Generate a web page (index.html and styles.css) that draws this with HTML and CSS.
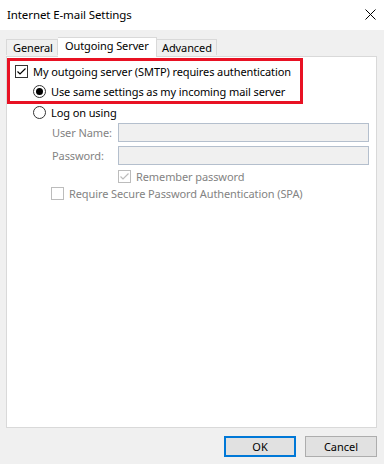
FILE: index.html
```html
<!DOCTYPE html>
<html>
<head>
<meta charset="utf-8">
<link rel="stylesheet" href="styles.css">
</head>
<body>
<div class="titlebar">
  <span class="title">Internet E-mail Settings</span>
  <svg class="close" width="11" height="11" viewBox="0 0 11 11"><path d="M0.5 0.5 L10.5 10.5 M10.5 0.5 L0.5 10.5" stroke="#000" stroke-width="1"/></svg>
</div>
<div class="body">
  <div class="tabs">
    <div class="tab t-general">General</div>
    <div class="tab active">Outgoing Server</div>
    <div class="tab t-adv">Advanced</div>
  </div>
  <div class="panel">
    <div class="highlight">
      <div class="row r1">
        <span class="check on"><svg width="11" height="11" viewBox="0 0 11 11"><path d="M1.5 5.5 L4 8 L9.5 2.5" fill="none" stroke="#000" stroke-width="1.2"/></svg></span>
        <span class="lbl">My outgoing server (SMTP) requires authentication</span>
      </div>
      <div class="row r2">
        <span class="radio on"></span>
        <span class="lbl">Use same settings as my incoming mail server</span>
      </div>
    </div>
    <div class="row r3">
      <span class="radio"></span>
      <span class="lbl">Log on using</span>
    </div>
    <div class="field f1">
      <span class="flabel">User Name:</span>
      <span class="input"></span>
    </div>
    <div class="field f2">
      <span class="flabel">Password:</span>
      <span class="input"></span>
    </div>
    <div class="row r4">
      <span class="check dis"><svg width="11" height="11" viewBox="0 0 11 11"><path d="M1.5 5.5 L4 8 L9.5 2.5" fill="none" stroke="#bcbcbc" stroke-width="1.2"/></svg></span>
      <span class="lbl dlbl">Remember password</span>
    </div>
    <div class="row r5">
      <span class="check dis"></span>
      <span class="lbl dlbl">Require Secure Password Authentication (SPA)</span>
    </div>
  </div>
  <div class="buttons">
    <button class="btn default">OK</button>
    <button class="btn">Cancel</button>
  </div>
</div>
</body>
</html>
```
FILE: styles.css
```css
* { box-sizing: border-box; }
html, body { margin: 0; padding: 0; }
body {
  width: 384px;
  height: 464px;
  background: #f0f0f0;
  font-family: "Noto Sans", "Liberation Sans", sans-serif;
  font-size: 11px;
  letter-spacing: -0.1px;
  color: #000;
  overflow: hidden;
}
.titlebar {
  height: 30px;
  background: #fff;
  display: flex;
  align-items: center;
  justify-content: space-between;
  padding: 0 8px 2px 7px;
}
.title { font-size: 11.5px; }
.close { display: block; }
.body { padding: 0 7px 0 6px; }
.tabs {
  display: flex;
  align-items: flex-end;
  height: 26px;
  padding-top: 7px;
  position: relative;
  z-index: 1;
}
.tab {
  height: 16px;
  border: 1px solid #d9d9d9;
  border-bottom: none;
  background: #f0f0f0;
  padding: 0 0 0 6px;
  line-height: 15px;
  margin-bottom: 1px;
  white-space: nowrap;
}
.t-general { width: 52px; }
.t-adv { width: 60px; border-left: none; padding-left: 5px; }
.tab.active {
  width: 99px;
  height: 20px;
  background: #fff;
  border-left: none;
  border-right: 1px solid #d9d9d9;
  margin-bottom: -1px;
  padding: 0 0 0 7px;
  line-height: 16px;
}
.panel {
  height: 372px;
  background: #fff;
  border: 1px solid #d9d9d9;
}
.highlight {
  margin: 1px 0 0 0;
  width: 296px;
  border: 3px solid #e81123;
  padding: 0 0 0 5px;
}
.row {
  display: flex;
  align-items: center;
  height: 20px;
  white-space: nowrap;
}
.r2 { padding-left: 18px; }
.r3 { padding-left: 26px; height: 16px; }
.lbl { margin-left: 5px; white-space: nowrap; }
.check {
  width: 13px;
  height: 13px;
  border: 1px solid #333;
  display: flex;
  align-items: center;
  justify-content: center;
  flex: none;
}
.check.dis { border-color: #bcbcbc; }
.radio {
  width: 13px;
  height: 13px;
  border: 1px solid #333;
  border-radius: 50%;
  display: flex;
  align-items: center;
  justify-content: center;
  flex: none;
}
.radio.on::after {
  content: "";
  width: 7px;
  height: 7px;
  border-radius: 50%;
  background: #000;
}
.field {
  display: flex;
  align-items: center;
  padding-left: 45px;
  margin-top: 3px;
}
.f2 { margin-top: 4px; }
.flabel {
  width: 66px;
  color: #838383;
  flex: none;
  white-space: nowrap;
}
.input {
  width: 251px;
  height: 19px;
  border: 1px solid #b4bfcd;
  background: #f0f0f0;
}
.r4 { padding-left: 111px; margin-top: 2px; height: 18px; }
.r5 { padding-left: 44px; height: 17px; }
.dlbl { color: #838383; }
.buttons {
  display: flex;
  justify-content: flex-end;
  gap: 9px;
  margin-top: 8px;
}
.btn {
  width: 72px;
  height: 21px;
  font: inherit;
  font-size: 11px;
  color: #000;
  background: #e1e1e1;
  border: 1px solid #adadad;
  padding: 0;
}
.btn.default { border: 2px solid #0078d7; }
```
